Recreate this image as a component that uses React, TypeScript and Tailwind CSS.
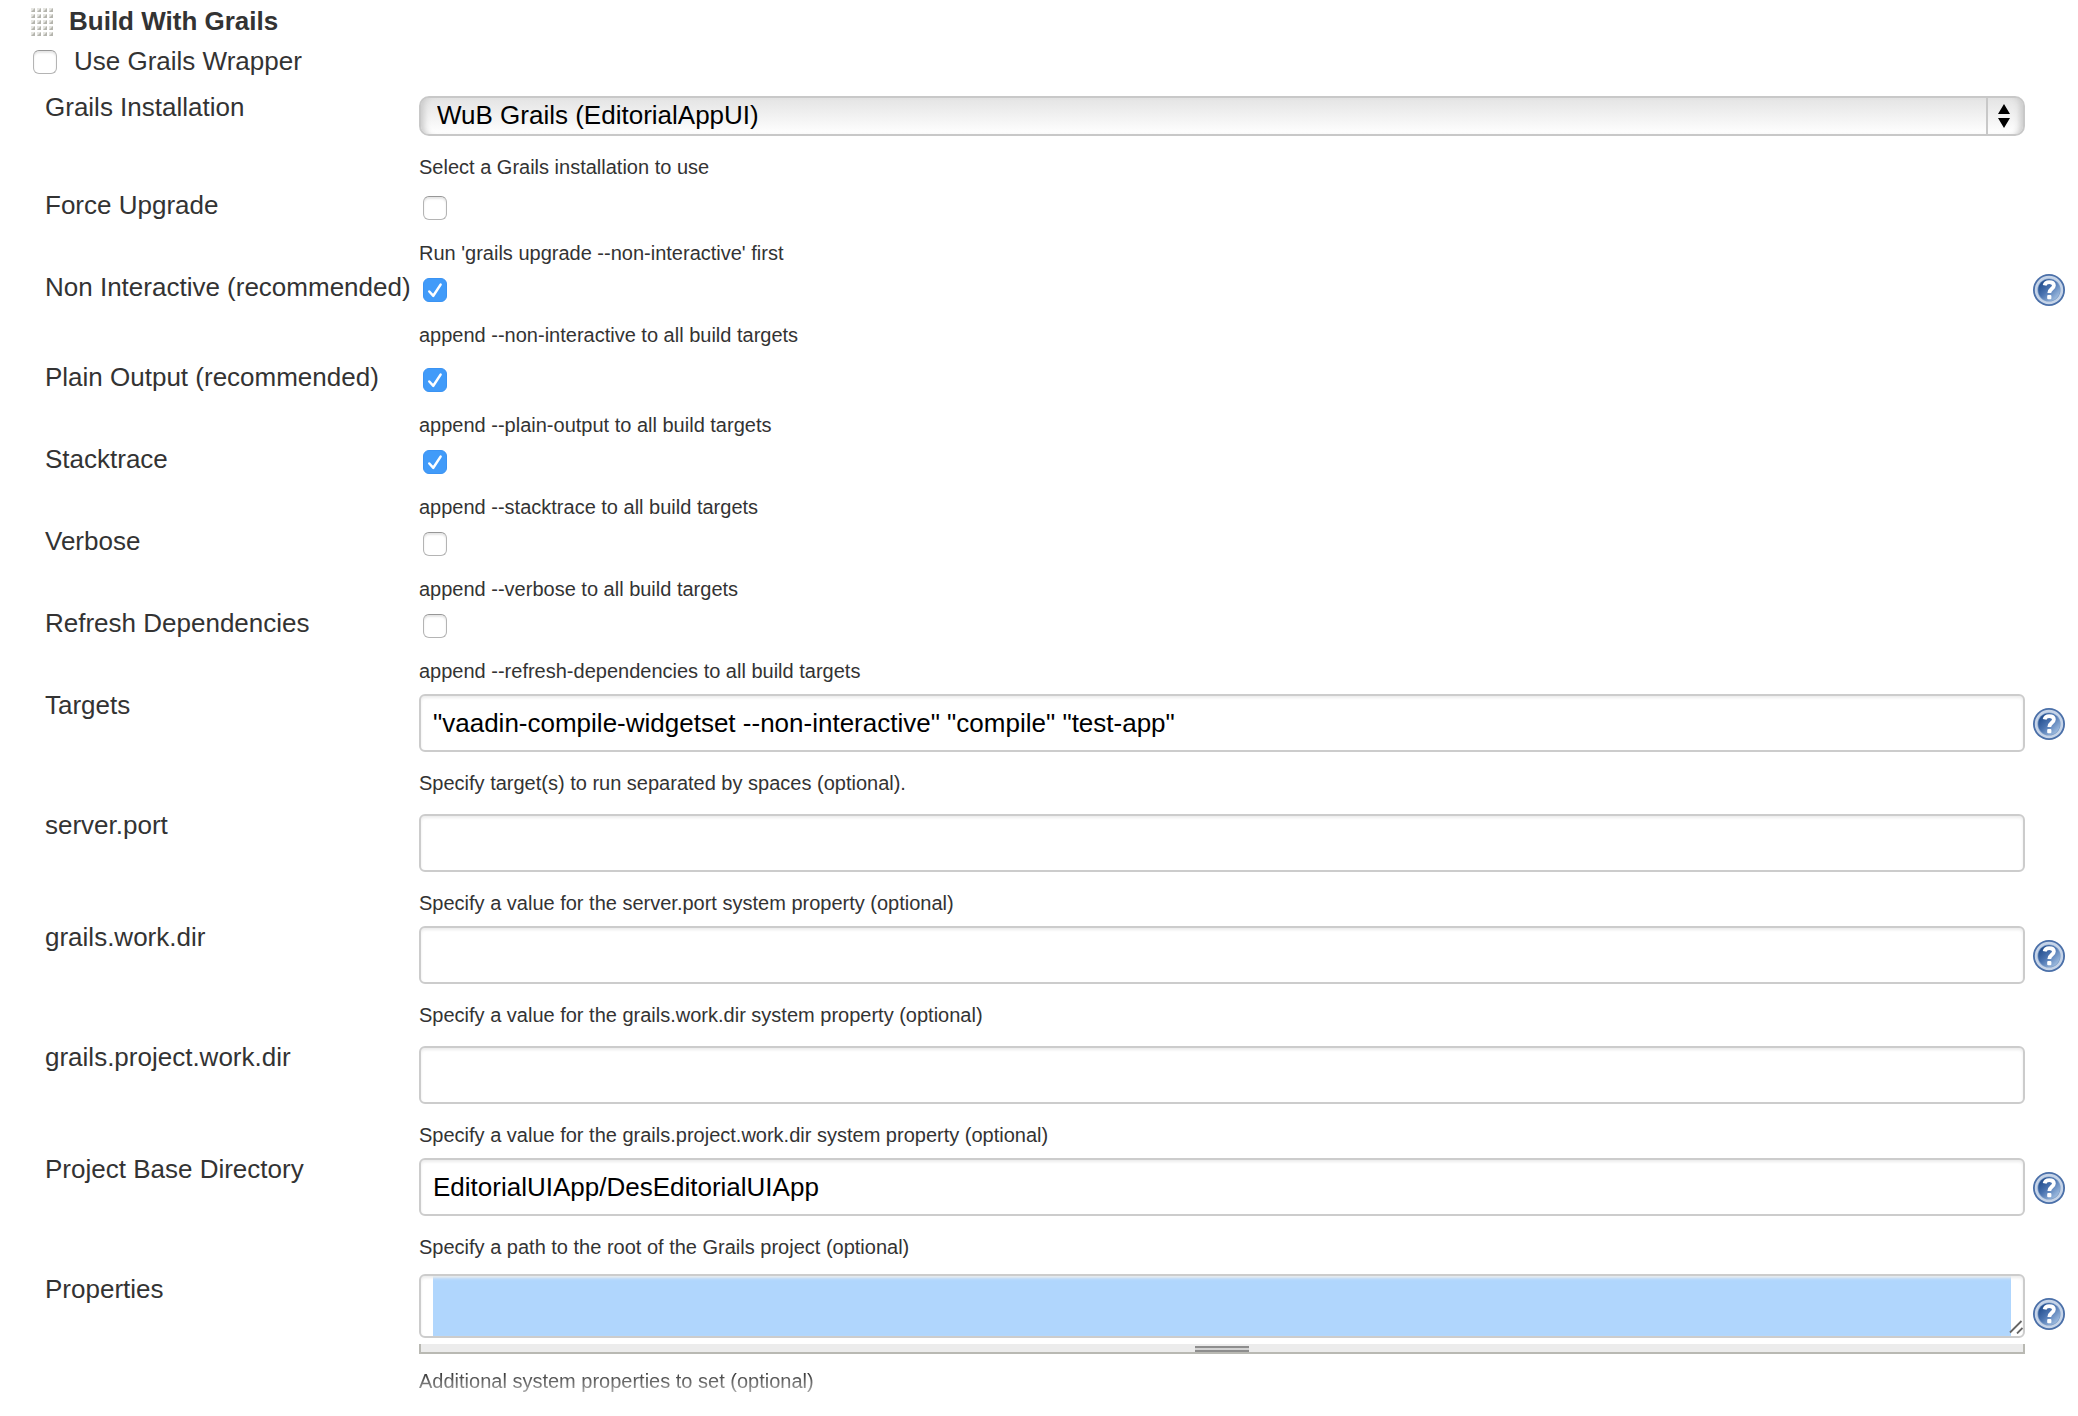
import { useId, useState, type ReactNode } from 'react';

function HelpButton({ topic }: { topic: string }) {
  const gradient = useId();
  return (
    <button type="button" aria-label={`Help for ${topic}`} className="block size-8 rounded-full">
      <svg viewBox="0 0 32 32" className="size-8">
        <defs>
          <linearGradient id={gradient} x1="0.1" y1="0.1" x2="0.9" y2="0.9">
            <stop offset="0" stopColor="#1f4a8a" />
            <stop offset="0.45" stopColor="#4a73b0" />
            <stop offset="1" stopColor="#a3c0e2" />
          </linearGradient>
        </defs>
        <circle cx="16" cy="16" r="16" fill="#4a6fa8" />
        <circle cx="16" cy="16" r="12.9" fill="#7f9fc9" stroke="#c6d4e8" strokeWidth="2.600" />
        <circle cx="16" cy="16" r="10.800" fill={`url(#${gradient})`} />
        <path
          d="M11.6 11.4c.4-2.200 2.100-3.300 4.600-3.300 2.900 0 4.700 1.400 4.700 3.500 0 3.200-4.600 3.400-4.600 7.400"
          fill="none"
          stroke="#fff"
          strokeWidth="3.800"
        />
        <rect x="14.200" y="21" width="4.200" height="4.200" rx="1" fill="#fff" />
      </svg>
    </button>
  );
}

function CheckBox({ id, initial = false }: { id: string; initial?: boolean }) {
  const [checked, setChecked] = useState(initial);
  return (
    <span className="relative block size-6 shrink-0">
      <input
        id={id}
        type="checkbox"
        checked={checked}
        onChange={(e) => setChecked(e.target.checked)}
        className="block size-6 appearance-none rounded-[6px] border border-[#b4b4b4] border-t-[#979797] bg-white shadow-[inset_0_2px_2px_#e6e6e6] checked:border-[#3b93f3] checked:bg-[#419bf9] checked:shadow-none"
      />
      {checked && (
        <svg viewBox="0 0 24 24" className="pointer-events-none absolute inset-0 size-6">
          <path
            d="M6.300 13.500 10.300 17.800 17.600 6.600"
            fill="none"
            stroke="#fff"
            strokeWidth="2.500"
            strokeLinecap="round"
            strokeLinejoin="round"
          />
        </svg>
      )}
    </span>
  );
}

function Row({
  id,
  label,
  help,
  children,
}: {
  id: string;
  label: string;
  help?: 'top' | 'middle' | 'low';
  children: ReactNode;
}) {
  return (
    <div className={help ? 'flex pb-2' : 'flex'}>
      <div className="w-[419px] shrink-0 pl-[45px]">
        <label htmlFor={id} className="whitespace-nowrap text-[26px] leading-[30px]">
          {label}
        </label>
      </div>
      <div className="min-w-0 flex-1">{children}</div>
      <div
        className={
          help === 'top'
            ? 'w-[53px] shrink-0 pt-0.5 pl-2'
            : help === 'low'
              ? 'w-[53px] shrink-0 pt-6 pl-2'
              : 'w-[53px] shrink-0 pt-[18px] pl-2'
        }
      >
        {help && <HelpButton topic={label} />}
      </div>
    </div>
  );
}

function CheckRow({
  id,
  label,
  hint,
  checked,
  help,
}: {
  id: string;
  label: string;
  hint: string;
  checked?: boolean;
  help?: 'top';
}) {
  return (
    <Row id={id} label={label} help={help}>
      <div className="pt-1.5 pl-1">
        <CheckBox id={id} initial={checked} />
      </div>
      <p className="pt-[21px] pb-[7px] text-[20px] leading-6">{hint}</p>
    </Row>
  );
}

function TextRow({
  id,
  label,
  hint,
  value = '',
  help,
}: {
  id: string;
  label: string;
  hint: string;
  value?: string;
  help?: 'middle';
}) {
  return (
    <Row id={id} label={label} help={help}>
      <div className="pt-1">
        <input
          id={id}
          type="text"
          defaultValue={value}
          className="block h-[58px] w-full rounded-[6px] border-2 border-[#ccc] bg-white px-3 text-[26px] text-black shadow-[inset_0_2px_3px_#ececec] outline-none"
        />
      </div>
      <p className="pt-[19px] pb-[7px] text-[20px] leading-6">{hint}</p>
    </Row>
  );
}

export default function App() {
  return (
    <form className="bg-white font-['Liberation_Sans',Arial,sans-serif] text-[#333]">
      <div className="flex items-start pt-1.5 pl-[31px]">
        <svg viewBox="0 0 22 28" className="mt-0.5 h-7 w-[22px] shrink-0" aria-hidden="true">
          {[0, 6, 12, 18, 24].map((y) =>
            [0, 6, 12, 18].map((x) => (
              <g key={`${x}-${y}`}>
                <rect x={x} y={y} width="4" height="4" fill="#e6e6e2" />
                <path d={`M${x + 4} ${y}v4h-4z`} fill="#b5b5ae" />
              </g>
            )),
          )}
        </svg>
        <h1 className="ml-4 text-[26px] leading-[30px] font-bold">Build With Grails</h1>
      </div>
      <div className="flex items-start pt-2.5 pb-4 pl-[33px]">
        <div className="pt-1">
          <CheckBox id="wrapper" />
        </div>
        <label htmlFor="wrapper" className="pl-[17px] text-[26px] leading-[30px]">
          Use Grails Wrapper
        </label>
      </div>

      <Row id="installation" label="Grails Installation">
        <div className="relative mt-1">
          <select
            id="installation"
            className="block h-10 w-full appearance-none rounded-[10px] border-2 border-[#c8c8c8] bg-linear-to-b from-[#e4e4e4] to-white pr-10 pb-0.5 pl-4 text-[26px] leading-[30px] text-black shadow-[inset_8px_0_6px_-5px_#c9c9c9,inset_-8px_0_6px_-5px_#c9c9c9] outline-none"
          >
            <option>WuB Grails (EditorialAppUI)</option>
          </select>
          <div className="pointer-events-none absolute inset-y-0.5 right-0 flex w-[39px] items-center border-l-2 border-[#c8c8c8] pl-2.5">
            <svg viewBox="0 0 12 24" className="h-6 w-3">
              <path d="M6 0 12 10H0zM0 14h12L6 24z" fill="#000" />
            </svg>
          </div>
        </div>
        <p className="pt-[19px] pb-[11px] text-[20px] leading-6">Select a Grails installation to use</p>
      </Row>

      <CheckRow id="force" label="Force Upgrade" hint="Run 'grails upgrade --non-interactive' first" />
      <CheckRow
        id="noninteractive"
        label="Non Interactive (recommended)"
        hint="append --non-interactive to all build targets"
        checked
        help="top"
      />
      <CheckRow
        id="plain"
        label="Plain Output (recommended)"
        hint="append --plain-output to all build targets"
        checked
      />
      <CheckRow id="stacktrace" label="Stacktrace" hint="append --stacktrace to all build targets" checked />
      <CheckRow id="verbose" label="Verbose" hint="append --verbose to all build targets" />
      <CheckRow
        id="refresh"
        label="Refresh Dependencies"
        hint="append --refresh-dependencies to all build targets"
      />
      <TextRow
        id="targets"
        label="Targets"
        value={'"vaadin-compile-widgetset --non-interactive" "compile" "test-app"'}
        hint="Specify target(s) to run separated by spaces (optional)."
        help="middle"
      />
      <TextRow
        id="port"
        label="server.port"
        hint="Specify a value for the server.port system property (optional)"
      />
      <TextRow
        id="workdir"
        label="grails.work.dir"
        hint="Specify a value for the grails.work.dir system property (optional)"
        help="middle"
      />
      <TextRow
        id="projectworkdir"
        label="grails.project.work.dir"
        hint="Specify a value for the grails.project.work.dir system property (optional)"
      />
      <TextRow
        id="basedir"
        label="Project Base Directory"
        value="EditorialUIApp/DesEditorialUIApp"
        hint="Specify a path to the root of the Grails project (optional)"
        help="middle"
      />

      <Row id="properties" label="Properties" help="low">
        <div className="relative">
          <textarea
            id="properties"
            className="block h-16 w-full resize-none rounded-[6px] border-2 border-[#ccc] bg-[#b0d6fd] bg-clip-content px-3 py-0 text-[26px] text-black shadow-[inset_0_2px_3px_#ececec] outline-none"
          />
          <svg viewBox="0 0 14 14" className="pointer-events-none absolute right-0.5 bottom-1 size-3.5">
            <path d="M1 12.500 12.500 1M8 13.500 13.500 8" stroke="#666" strokeWidth="1.800" fill="none" />
          </svg>
        </div>
        <div className="mt-1.5 flex h-2.5 items-end justify-center border-2 border-t-0 border-[#b9b9b3] bg-[#ececec]">
          <div className="h-1.5 w-[54px] border-y-2 border-[#8e8e8e] bg-[#d4d4d4]" />
        </div>
        <p className="mt-[15px] text-[20px] leading-6 [mask-image:linear-gradient(to_bottom,black_15%,rgba(0,0,0,0.4))]">
          Additional system properties to set (optional)
        </p>
      </Row>
    </form>
  );
}
